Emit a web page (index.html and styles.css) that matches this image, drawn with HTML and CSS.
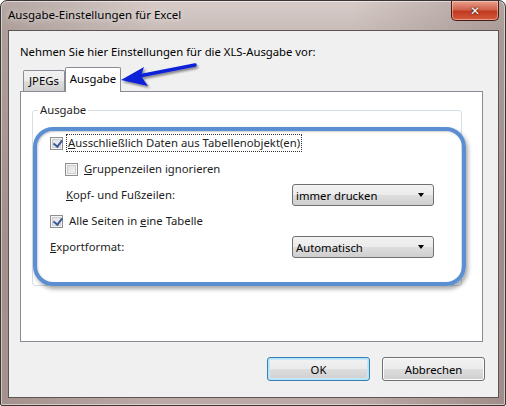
FILE: index.html
```html
<!DOCTYPE html>
<html lang="de">
<head>
<meta charset="utf-8">
<link rel="stylesheet" href="styles.css">
</head>
<body>
<div class="window">
  <div class="titlebar">
    <span class="title">Ausgabe-Einstellungen für Excel</span>
    <div class="close"><span class="x">✕</span></div>
  </div>
  <div class="client">
    <div class="intro">Nehmen Sie hier Einstellungen für die XLS-Ausgabe vor:</div>
    <div class="tabs">
      <div class="tab">JPEGs</div>
      <div class="tab active">Ausgabe</div>
    </div>
    <div class="panel">
      <fieldset class="group">
        <legend>Ausgabe</legend>
        <div class="rows">
          <div class="row">
            <span class="cb checked"></span>
            <span class="label focus"><u>A</u>usschließlich Daten aus Tabellenobjekt(en)</span>
          </div>
          <div class="row indent">
            <span class="cb"></span>
            <span class="label"><u>G</u>ruppenzeilen ignorieren</span>
          </div>
          <div class="row split indent2">
            <span class="label"><u>K</u>opf- und Fußzeilen:</span>
            <div class="select"><span>immer drucken</span><span class="arrow"></span></div>
          </div>
          <div class="row">
            <span class="cb checked"></span>
            <span class="label">Alle Seiten in <u>e</u>ine Tabelle</span>
          </div>
          <div class="row split">
            <span class="label"><u>E</u>xportformat:</span>
            <div class="select"><span>Automatisch</span><span class="arrow"></span></div>
          </div>
        </div>
      </fieldset>
      <div class="annot"></div>
    </div>
    <div class="buttons">
      <div class="btn default">OK</div>
      <div class="btn">Abbrechen</div>
    </div>
    <svg class="pointer" width="90" height="30" viewBox="0 0 90 30">
      <defs>
        <filter id="sh" x="-20%" y="-40%" width="140%" height="180%">
          <feDropShadow dx="1.5" dy="2" stdDeviation="1.2" flood-color="#000" flood-opacity="0.45"/>
        </filter>
      </defs>
      <g filter="url(#sh)">
        <path d="M76 4 L20 15" stroke="#1020d8" stroke-width="3.5" stroke-linecap="round" fill="none"/>
        <path d="M2 19 L25 6 L22 15 L29 25 Z" fill="#1020d8"/>
      </g>
    </svg>
  </div>
</div>
</body>
</html>
```

FILE: styles.css
```css
* { box-sizing: border-box; }
html, body { margin: 0; padding: 0; }
body {
  width: 506px;
  height: 406px;
  overflow: hidden;
  background: #ffffff;
  font-family: "Noto Sans", "Open Sans", sans-serif;
  font-size: 11.3px;
  color: #000;
}
.window {
  width: 506px;
  height: 406px;
  border: 1px solid #3c3535;
  border-radius: 7px 7px 2px 2px;
  background:
    linear-gradient(90deg, rgba(120,100,95,0.35) 0, rgba(255,255,255,0) 30%, rgba(255,255,255,0) 70%, rgba(110,90,85,0.35) 100%),
    linear-gradient(180deg, #d6cbc8 0, #c9bcb8 30px, #b9a6a2 60%, #bca9a5 100%);
  padding: 0 6px 7px 7px;
  display: flex;
  flex-direction: column;
  box-shadow: inset 0 0 0 1px rgba(255,255,255,0.5);
}
.titlebar {
  height: 29px;
  display: flex;
  justify-content: space-between;
  align-items: flex-start;
}
.title {
  margin-top: 6px;
  font-size: 11.5px;
  color: #000;
  text-shadow: 0 0 6px rgba(255,255,255,0.9);
}
.close {
  width: 48px;
  height: 20px;
  border: 1px solid #4a1a12;
  border-top: none;
  border-radius: 0 0 5px 5px;
  background: linear-gradient(180deg, #e8a08c 0, #d1634c 45%, #c13a22 55%, #d45a3c 100%);
  display: flex;
  align-items: center;
  justify-content: center;
  box-shadow: inset 0 0 0 1px rgba(255,220,210,0.5);
}
.close .x {
  color: #fff;
  font-family: "DejaVu Sans", sans-serif;
  font-weight: bold;
  font-size: 12px;
  line-height: 1;
  text-shadow: 0 0 1px #3a1008, 0 0 2px #3a1008;
}
.client {
  position: relative;
  flex: 1;
  border: 1px solid #5d5454;
  background: #f0f0f0;
  padding: 12px 15px 0 11px;
  display: flex;
  flex-direction: column;
}
.intro {
  line-height: 17px;
  height: 17px;
}
.tabs {
  margin-top: 7px;
  height: 24px;
  display: flex;
  align-items: flex-end;
  padding-left: 3px;
  position: relative;
  z-index: 1;
}
.tab {
  height: 21px;
  padding: 0 5px;
  line-height: 20px;
  border: 1px solid #898c95;
  border-bottom: none;
  background: linear-gradient(180deg, #f2f2f2 0, #ebebeb 50%, #dddddd 51%, #cfcfcf 100%);
  border-radius: 2px 2px 0 0;
}
.tab.active {
  margin-left: 0;
  padding: 0 4px;
  line-height: 22px;
  background: #ffffff;
  margin-bottom: -1px;
  height: 25px;
}
.panel {
  position: relative;
  height: 251px;
  border: 1px solid #898c95;
  background: #ffffff;
  padding: 10px 20px 0 11px;
}
.group {
  margin: 0;
  padding: 0;
  height: 184px;
  border: 1px solid #d5dfe5;
  border-radius: 3px;
}
.group legend {
  padding: 0 2px;
  margin-left: 5px;
  line-height: 16px;
  color: #1e1e1e;
}
.rows {
  padding: 12px 27px 0 17px;
  display: flex;
  flex-direction: column;
}
.row {
  height: 26px;
  display: flex;
  align-items: center;
}
.row.indent { padding-left: 15px; }
.row.indent2 { padding-left: 16px; }
.row.split { justify-content: space-between; }
.cb {
  width: 13px;
  height: 13px;
  border: 1px solid #8e8f8f;
  background: linear-gradient(135deg, #dcdcdc 0, #f5f5f5 100%);
  box-shadow: inset 0 0 0 1px #f4f4f4, inset 0 0 0 2px #cfcfcf;
  margin-right: 6px;
  position: relative;
  flex: none;
}
.cb.checked::after {
  content: "";
  position: absolute;
  left: 3.5px;
  top: 0.5px;
  width: 3.5px;
  height: 7px;
  border-right: 2px solid #3d5a9c;
  border-bottom: 2px solid #3d5a9c;
  transform: rotate(38deg);
}
.label { line-height: 16px; color: #1e1e1e; }
.label.focus { outline: 1px dotted #333; outline-offset: 0; padding: 0 1px; margin-left: -2px; }
.select {
  width: 142px;
  height: 22px;
  border: 1px solid #707070;
  border-radius: 3px;
  background: linear-gradient(180deg, #f2f2f2 0, #ebebeb 50%, #dddddd 51%, #cfcfcf 100%);
  display: flex;
  align-items: center;
  justify-content: space-between;
  padding: 0 9px 0 3px;
  color: #000;
}
.select .arrow {
  width: 0;
  height: 0;
  border-left: 3.5px solid transparent;
  border-right: 3.5px solid transparent;
  border-top: 4px solid #000;
}
.annot {
  position: absolute;
  left: 12px;
  top: 35px;
  width: 433px;
  height: 159px;
  border: 4px solid #5b8fd2;
  border-radius: 20px;
  box-shadow: 2px 3px 4px rgba(0,0,0,0.35), inset 1px 1px 2px rgba(0,0,0,0.2);
  pointer-events: none;
}
.buttons {
  margin-top: 15px;
  display: flex;
  justify-content: flex-end;
  gap: 12px;
  margin-right: -2px;
}
.btn {
  width: 103px;
  height: 24px;
  border: 1px solid #707070;
  border-radius: 3px;
  background: linear-gradient(180deg, #f2f2f2 0, #ebebeb 50%, #dddddd 51%, #cfcfcf 100%);
  display: flex;
  align-items: center;
  justify-content: center;
  box-shadow: inset 0 0 0 1px #fcfcfc;
}
.btn.default {
  border-color: #3c7fb1;
  box-shadow: inset 0 0 0 1px #48d8fb33, inset 0 0 0 2px #c8e8f8;
}
.pointer {
  position: absolute;
  left: 110px;
  top: 30px;
}
```
